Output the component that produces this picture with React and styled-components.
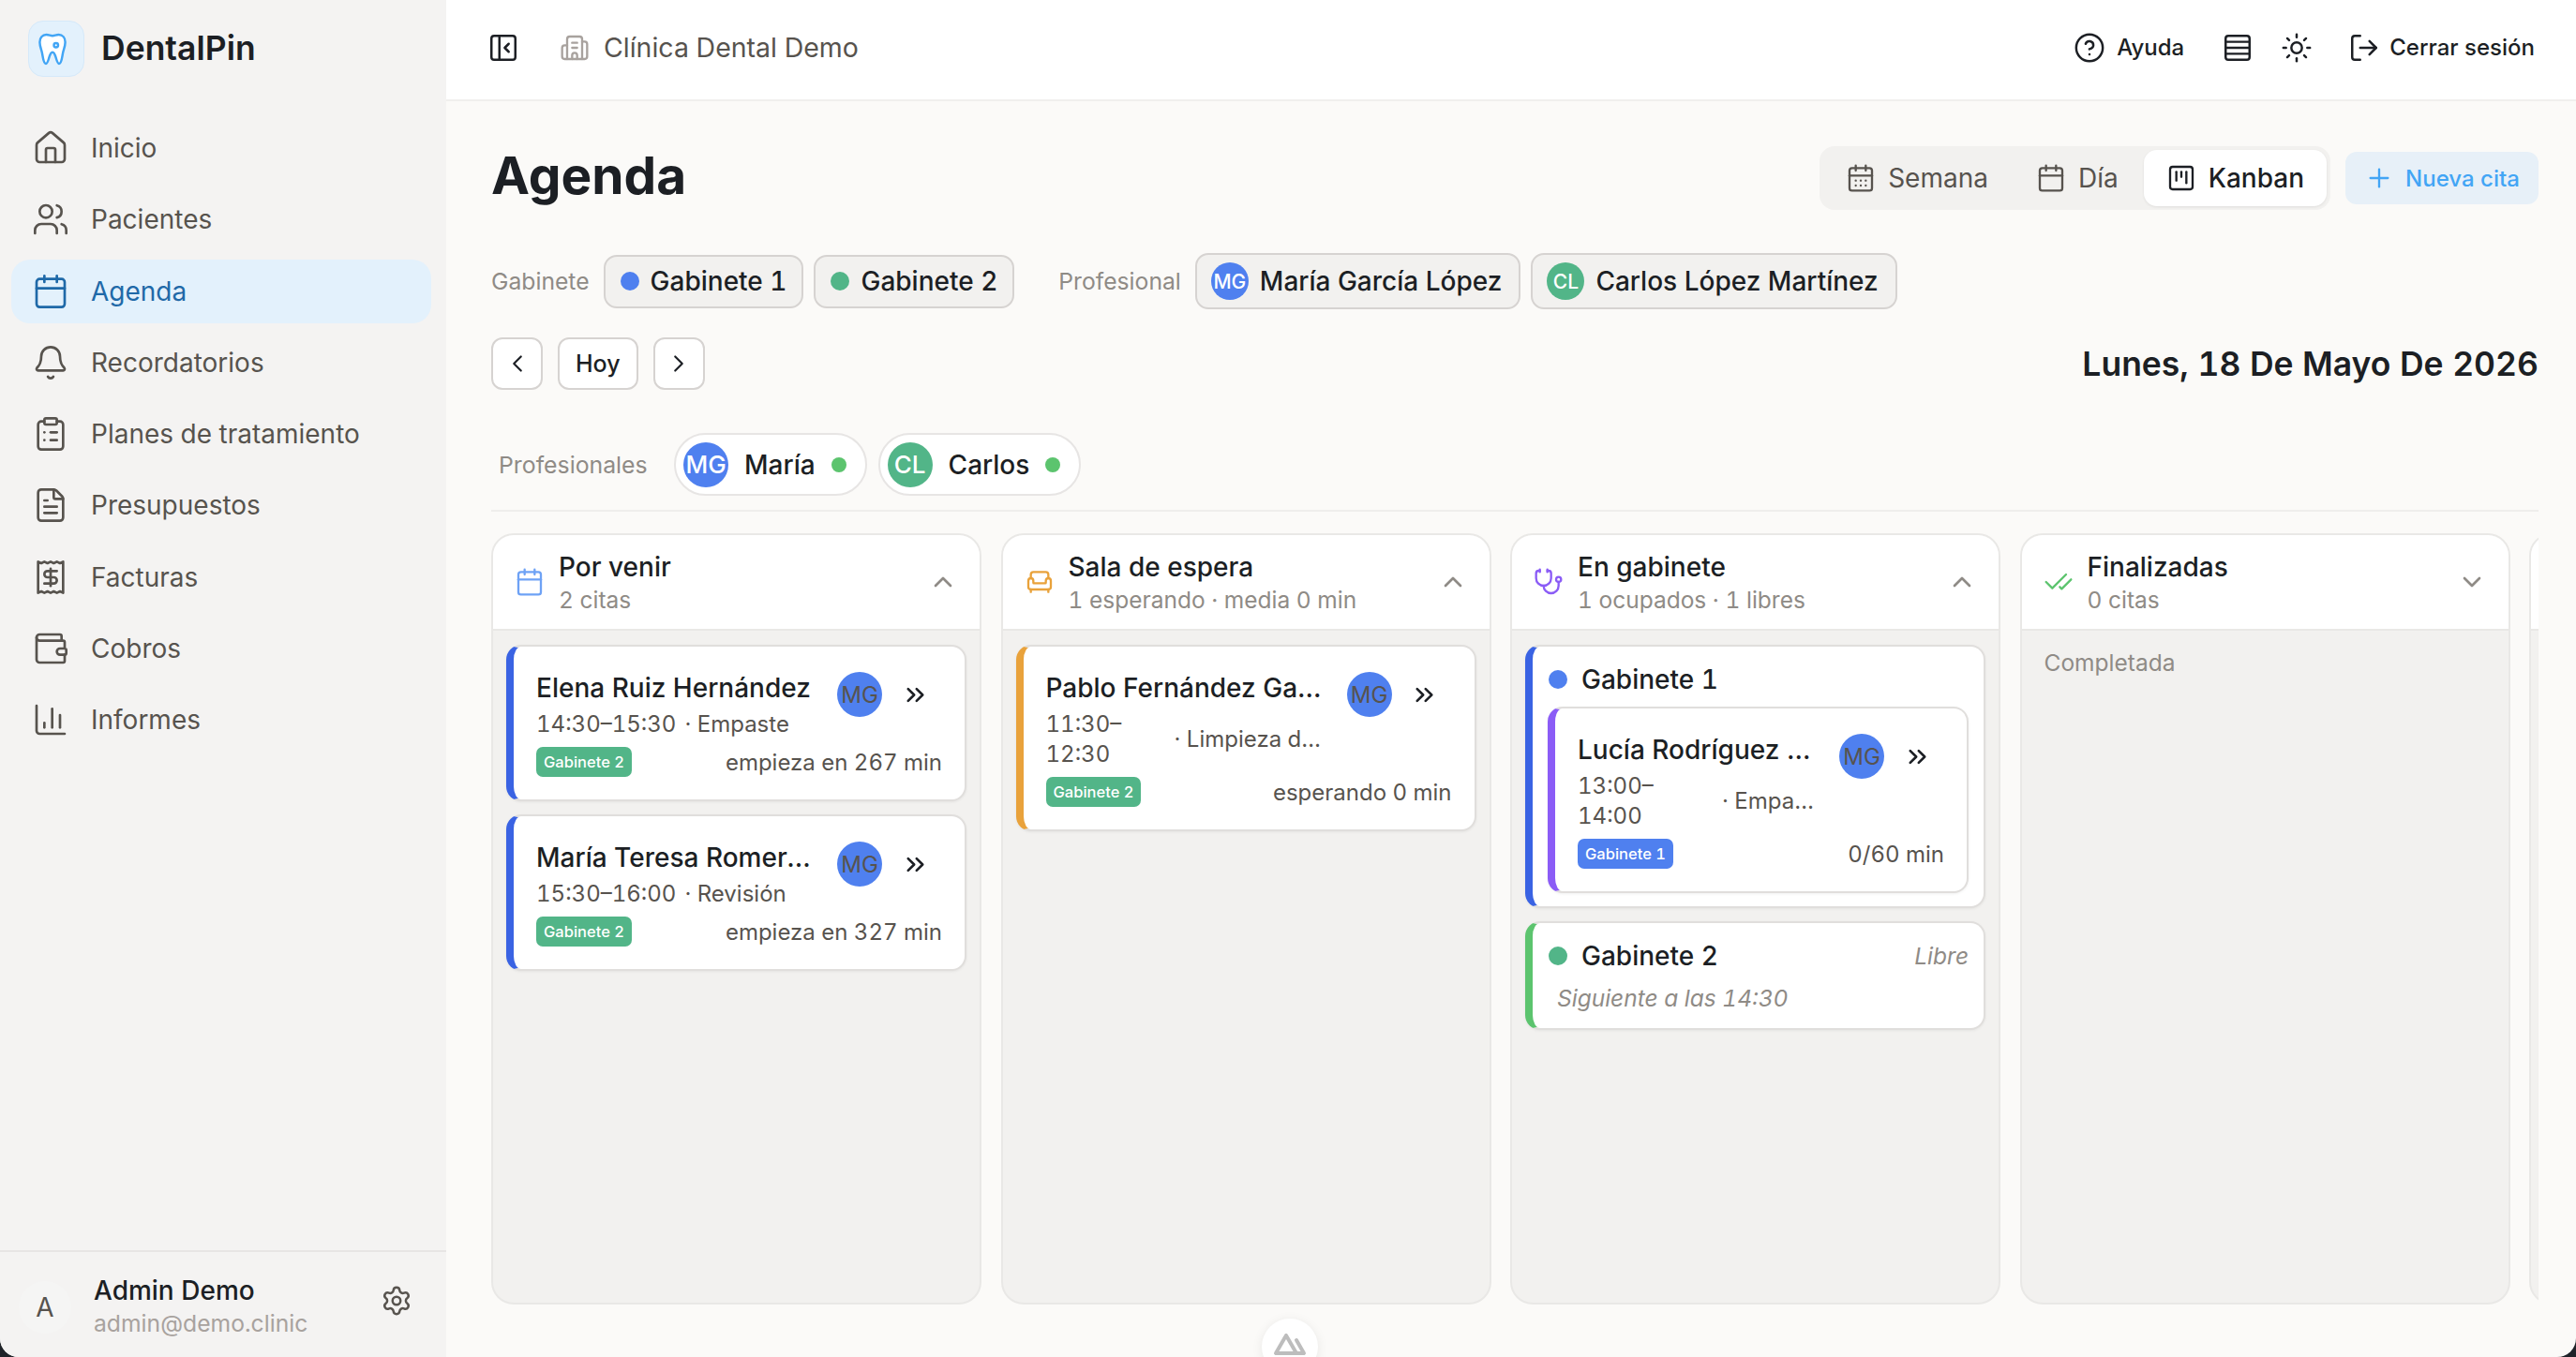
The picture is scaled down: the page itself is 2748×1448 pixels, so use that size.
import React from 'react';
import styled, { createGlobalStyle } from 'styled-components';
import {
  House, Users, Calendar, Bell, ClipboardList, FileText, Receipt, Wallet, ChartColumn,
  Settings, PanelLeftClose, Building2, CircleHelp, Rows4, Sun, LogOut, CalendarDays,
  SquareKanban, Plus, ChevronLeft, ChevronRight, ChevronUp, ChevronDown, ChevronsRight,
  Armchair, Stethoscope, CheckCheck,
} from 'lucide-react';

const GlobalStyle = createGlobalStyle`
  html, body {
    margin: 0;
    padding: 0;
    background: #1f2329;
  }
  * {
    box-sizing: border-box;
  }
`;

const Shell = styled.div`
  width: 2748px;
  height: 1448px;
  display: flex;
  overflow: hidden;
  position: relative;
  border-radius: 0 0 20px 20px;
  font-family: Inter, "Noto Sans", sans-serif;
  font-variant-numeric: tabular-nums;
  color: #1c1f24;
  background: #fbfaf8;
`;

/* sidebar */
const Sidebar = styled.aside`
  width: 476px;
  flex: none;
  display: flex;
  flex-direction: column;
  background: #f4f3f2;
`;

const Brand = styled.div`
  height: 124px;
  flex: none;
  padding: 22px 30px 0;
  display: flex;
  align-items: flex-start;
  gap: 18px;
`;

const LogoBox = styled.div`
  width: 60px;
  height: 60px;
  padding-right: 8px;
  border-radius: 16px;
  border: 1px solid #d5e9fa;
  background: #e3f1fc;
  display: flex;
  align-items: center;
  justify-content: center;
`;

const BrandName = styled.div`
  font-size: 35.5px;
  line-height: 60px;
  font-weight: 600;
`;

const Nav = styled.nav`
  flex: 1;
  display: flex;
  flex-direction: column;
  gap: 8.3px;
  padding: 0 16px 0 12px;
`;

const NavItem = styled.div`
  height: 68px;
  display: flex;
  align-items: center;
  gap: 23px;
  padding-left: 22px;
  border-radius: 20px;
  font-size: 28px;
  color: ${p => (p.$active ? '#1f69a8' : '#57534e')};
  background: ${p => (p.$active ? '#e3f1fc' : 'transparent')};
`;

const UserBar = styled.div`
  height: 114px;
  flex: none;
  border-top: 2px solid #e7e5e4;
  display: flex;
  align-items: center;
  padding: 0 36px 0 20px;
  gap: 24px;
`;

const UserAvatar = styled.div`
  width: 56px;
  height: 56px;
  margin-top: 6px;
  border-radius: 50%;
  background: #f5f5f4;
  color: #57534e;
  font-size: 28px;
  display: flex;
  align-items: center;
  justify-content: center;
`;

const UserInfo = styled.div`
  flex: 1;
  padding-top: 4px;
`;

const UserName = styled.div`
  font-size: 28px;
  line-height: 36px;
  font-weight: 500;
`;

const UserMail = styled.div`
  font-size: 24.7px;
  line-height: 34px;
  color: #a8a29e;
`;

const GearWrap = styled.span`
  display: flex;
  margin-bottom: 8px;
  color: #57534e;
`;

/* main area */
const Main = styled.main`
  flex: 1;
  min-width: 0;
  display: flex;
  flex-direction: column;
`;

const TopBar = styled.header`
  height: 108px;
  flex: none;
  background: #fff;
  border-bottom: 2px solid #f0efed;
  display: flex;
  align-items: center;
  padding: 0 44px 5px 44px;
`;

const Clinic = styled.div`
  flex: 1;
  display: flex;
  align-items: center;
  gap: 15px;
  margin-left: 43px;
  font-size: 28.5px;
  color: #57534e;
`;

const TopAction = styled.div`
  display: flex;
  align-items: center;
  gap: ${p => p.$inner || 12}px;
  margin-left: ${p => p.$gap}px;
  font-size: 24px;
  font-weight: 500;
`;

const Content = styled.div`
  flex: 1;
  min-height: 0;
  display: flex;
  flex-direction: column;
  padding: 48px 40px 0 48px;
`;

const TitleRow = styled.div`
  display: flex;
  align-items: center;
  justify-content: space-between;
`;

const Title = styled.h1`
  margin: 0 0 6px;
  font-size: 55px;
  line-height: 62px;
  font-weight: 700;
`;

const TitleActions = styled.div`
  display: flex;
  align-items: center;
  gap: 16px;
`;

const Tabs = styled.div`
  height: 68px;
  padding: 4px;
  display: flex;
  gap: 3px;
  border-radius: 16px;
  background: #f2f1ef;
`;

const Tab = styled.div`
  height: 60px;
  padding: 0 24px;
  display: flex;
  align-items: center;
  gap: 13px;
  border-radius: 14px;
  font-size: 28px;
  font-weight: ${p => (p.$active ? 500 : 400)};
  color: ${p => (p.$active ? '#1c1f24' : '#57534e')};
  background: ${p => (p.$active ? '#fff' : 'transparent')};
  box-shadow: ${p => (p.$active ? '0 1px 3px rgba(0,0,0,.08)' : 'none')};
`;

const NewButton = styled.div`
  width: 206px;
  height: 56px;
  display: flex;
  align-items: center;
  justify-content: center;
  gap: 12px;
  border-radius: 12px;
  background: #e7f0f8;
  color: #42a5f5;
  font-size: 24px;
  font-weight: 500;
`;

const FilterRow = styled.div`
  margin-top: 46px;
  height: 60px;
  display: flex;
  align-items: center;
`;

const FilterLabel = styled.span`
  font-size: 24.7px;
  color: #8f8b86;
  margin-right: 15px;
`;

const FilterChips = styled.div`
  display: flex;
  align-items: center;
  gap: 11px;
  margin-right: ${p => p.$after || 0}px;
`;

const Chip = styled.div`
  height: ${p => (p.$tall ? 60 : 57)}px;
  padding: 0 ${p => (p.$tall ? 18 : 16)}px 0 ${p => (p.$tall ? 15 : 16)}px;
  display: flex;
  align-items: center;
  gap: 12px;
  border: 2px solid #d6d3d1;
  border-radius: 14px;
  background: #f2f1ef;
  font-size: 28px;
  font-weight: 500;
`;

const Dot = styled.span`
  width: ${p => p.$size || 20}px;
  height: ${p => p.$size || 20}px;
  flex: none;
  border-radius: 50%;
  background: ${p => p.$color};
`;

const Avatar = styled.span`
  width: ${p => p.$size}px;
  height: ${p => p.$size}px;
  flex: none;
  border-radius: 50%;
  display: flex;
  align-items: center;
  justify-content: center;
  background: ${p => p.$color};
  color: ${p => p.$ink || '#fff'};
  font-size: ${p => p.$font}px;
  font-weight: ${p => p.$weight || 500};
`;

const DateRow = styled.div`
  margin-top: 30px;
  display: flex;
  align-items: center;
  justify-content: space-between;
`;

const Pager = styled.div`
  display: flex;
  gap: 16px;
`;

const PageButton = styled.div`
  height: 56px;
  min-width: 55px;
  padding: 0 ${p => (p.$text ? 17 : 0)}px;
  display: flex;
  align-items: center;
  justify-content: center;
  border: 2px solid #d6d3d1;
  border-radius: 12px;
  background: #fff;
  font-size: 25px;
  font-weight: 500;
`;

const DateTitle = styled.div`
  font-size: 35.5px;
  font-weight: 600;
`;

const ProRow = styled.div`
  margin-top: 46px;
  padding: 0 0 15px 8px;
  display: flex;
  align-items: center;
  gap: 12px;
  border-bottom: 2px solid #efeeec;
`;

const ProLabel = styled.span`
  font-size: 24.8px;
  color: #8f8b86;
  width: 159px;
  margin-right: 16px;
`;

const ProPill = styled.div`
  height: 67px;
  padding: 0 20px 0 8px;
  display: flex;
  align-items: center;
  gap: 17px;
  border: 2px solid #e7e5e4;
  border-radius: 34px;
  background: #fff;
  font-size: 28px;
  font-weight: 500;
`;

/* kanban board */
const Board = styled.div`
  margin-top: 23px;
  height: 823px;
  display: flex;
  gap: 20.5px;
  overflow: hidden;
`;

const Column = styled.section`
  width: 523px;
  flex: none;
  display: flex;
  flex-direction: column;
  border: 2px solid #e9e8e6;
  border-radius: 24px;
  background: #f2f1ef;
  overflow: hidden;
`;

const ColumnHead = styled.div`
  height: 102px;
  flex: none;
  padding: 0 23px 0 23px;
  display: flex;
  align-items: center;
  gap: 15px;
  background: #fff;
  border-bottom: 2px solid #e9e8e6;
  color: #8f8b86;
`;

const ColumnText = styled.div`
  flex: 1;
`;

const ColumnTitle = styled.div`
  font-size: 28px;
  line-height: 38px;
  font-weight: 500;
  color: #1c1f24;
`;

const ColumnSub = styled.div`
  font-size: 24.5px;
  line-height: 32px;
  color: #8f8b86;
`;

const ColumnBody = styled.div`
  flex: 1;
  padding: 15px 14px;
  display: flex;
  flex-direction: column;
  gap: 14px;
`;

const EmptyNote = styled.div`
  padding: 2px 10px 0;
  font-size: 24.5px;
  line-height: 34px;
  color: #8f8b86;
`;

const Card = styled.article`
  padding: ${p => (p.$tight ? '16px 16px 14px' : '25px 24px 24px 24px')};
  border: 2px solid #e0dedc;
  border-left: 8px solid ${p => p.$accent};
  border-radius: 16px;
  background: #fff;
  box-shadow: 0 1px 3px rgba(0, 0, 0, 0.06);
`;

const CardTop = styled.div`
  display: flex;
  align-items: flex-start;
`;

const CardMain = styled.div`
  flex: 1;
  min-width: 0;
`;

const PatientName = styled.div`
  font-size: 28px;
  line-height: 38px;
  font-weight: 500;
  white-space: nowrap;
  overflow: hidden;
  text-overflow: ellipsis;
`;

const TimeRow = styled.div`
  margin-top: 4px;
  display: flex;
  align-items: center;
  gap: 9px;
  font-size: 24px;
  line-height: 32px;
  color: #57534e;
`;

const TimeText = styled.span`
  flex: none;
  width: ${p => (p.$width ? `${p.$width}px` : 'auto')};
`;

const Treatment = styled.span`
  min-width: 0;
  white-space: nowrap;
  overflow: hidden;
  text-overflow: ellipsis;
`;

const CardSide = styled.div`
  flex: none;
  margin: 2px 7px 0 25px;
  display: flex;
  align-items: center;
  gap: 13px;
`;

const NextButton = styled.span`
  width: 44px;
  height: 44px;
  display: flex;
  align-items: center;
  justify-content: center;
  color: #1c1f24;
`;

const CardBottom = styled.div`
  margin-top: 8px;
  height: 32px;
  display: flex;
  align-items: center;
  justify-content: space-between;
  font-size: 24px;
  color: #57534e;
`;

const RoomBadge = styled.span`
  height: 32px;
  padding: 0 8px;
  display: flex;
  align-items: center;
  border-radius: 7px;
  background: ${p => p.$color};
  color: #fff;
  font-size: 16.5px;
  font-weight: 500;
`;

const RoomHead = styled.div`
  height: 38px;
  display: flex;
  align-items: center;
  gap: 15px;
  padding-left: 1px;
  font-size: 28px;
  font-weight: 500;
`;

const RoomName = styled.span`
  flex: 1;
`;

const FreeTag = styled.span`
  font-size: 24.5px;
  font-style: italic;
  font-weight: 400;
  color: #8f8b86;
`;

const NextNote = styled.div`
  margin: 10px 0 2px;
  padding-left: 10px;
  font-size: 24.5px;
  line-height: 32px;
  font-style: italic;
  color: #8f8b86;
`;

const NestedCard = styled(Card)`
  margin-top: 10px;
`;

const DevButton = styled.div`
  position: absolute;
  left: 1346px;
  top: 1407px;
  width: 60px;
  height: 60px;
  border-radius: 50%;
  background: #fff;
  box-shadow: 0 2px 12px rgba(0, 0, 0, 0.08);
  display: flex;
  justify-content: center;
  padding-top: 14px;
`;

const ToothIcon = () => (
  <svg width="30" height="37" viewBox="0 0 32 38" fill="#fff" stroke="#42a5f5" strokeWidth="2.6" strokeLinejoin="round">
    <path d="M9 2.500c3 0 4.500 1.200 7 1.200s4-1.200 7-1.200c4.500 0 7.500 3.500 7.500 8.500 0 4.500-1.700 8-2.600 12-1 4.500-1.400 12.500-4.400 12.500-3.500 0-3.300-13-7.500-13s-4 13-7.500 13c-3 0-3.400-8-4.400-12.500C3.200 19 1.500 15.500 1.500 11c0-5 3-8.500 7.500-8.500z" />
    <circle cx="20" cy="14.500" r="2.400" />
  </svg>
);

const NuxtMark = () => (
  <svg width="36" height="26" viewBox="0 0 36 26" fill="none" stroke="#bdbdbd" strokeWidth="4" strokeLinejoin="round" strokeLinecap="round">
    <path d="M14 4 3 23h13M14 4l11 19h-9M14 4M25 9l8 14h-8" />
  </svg>
);

const navItems = [
  [House, 'Inicio'],
  [Users, 'Pacientes'],
  [Calendar, 'Agenda', true],
  [Bell, 'Recordatorios'],
  [ClipboardList, 'Planes de tratamiento'],
  [FileText, 'Presupuestos'],
  [Receipt, 'Facturas'],
  [Wallet, 'Cobros'],
  [ChartColumn, 'Informes'],
];

const BLUE = '#4f80ef';
const GREEN = '#52b588';

const Appointment = ({ accent, name, time, timeWidth, treatment, room, roomColor, note, Wrap = Card }) => (
  <Wrap $accent={accent}>
    <CardTop>
      <CardMain>
        <PatientName>{name}</PatientName>
        <TimeRow>
          <TimeText $width={timeWidth}>{time}</TimeText>
          <Treatment>· {treatment}</Treatment>
        </TimeRow>
      </CardMain>
      <CardSide>
        <Avatar $size={48} $font={24} $weight={400} $color={BLUE} $ink="#57534e">MG</Avatar>
        <NextButton><ChevronsRight size={31} strokeWidth={2} /></NextButton>
      </CardSide>
    </CardTop>
    <CardBottom>
      <RoomBadge $color={roomColor}>{room}</RoomBadge>
      <span>{note}</span>
    </CardBottom>
  </Wrap>
);

const BoardColumn = ({ icon: Icon, color, title, sub, open = true, children }) => (
  <Column>
    <ColumnHead>
      <Icon size={32} color={color} strokeWidth={1.75} />
      <ColumnText>
        <ColumnTitle>{title}</ColumnTitle>
        <ColumnSub>{sub}</ColumnSub>
      </ColumnText>
      {open ? <ChevronUp size={32} strokeWidth={2} /> : <ChevronDown size={32} strokeWidth={2} />}
    </ColumnHead>
    <ColumnBody>{children}</ColumnBody>
  </Column>
);

const App = () => (
  <>
    <GlobalStyle />
    <Shell>
      <Sidebar>
        <Brand>
          <LogoBox><ToothIcon /></LogoBox>
          <BrandName>DentalPin</BrandName>
        </Brand>
        <Nav>
          {navItems.map(([Icon, label, active]) => (
            <NavItem key={label} $active={active}>
              <Icon size={40} strokeWidth={1.6} />
              {label}
            </NavItem>
          ))}
        </Nav>
        <UserBar>
          <UserAvatar>A</UserAvatar>
          <UserInfo>
            <UserName>Admin Demo</UserName>
            <UserMail>admin@demo.clinic</UserMail>
          </UserInfo>
          <GearWrap><Settings size={34} strokeWidth={1.75} /></GearWrap>
        </UserBar>
      </Sidebar>
      <Main>
        <TopBar>
          <PanelLeftClose size={34} strokeWidth={1.75} />
          <Clinic>
            <Building2 size={32} color="#a8a29e" strokeWidth={1.75} />
            Clínica Dental Demo
          </Clinic>
          <TopAction><CircleHelp size={34} strokeWidth={1.75} />Ayuda</TopAction>
          <TopAction $gap={40}><Rows4 size={34} strokeWidth={1.75} /></TopAction>
          <TopAction $gap={29}><Sun size={34} strokeWidth={1.75} /></TopAction>
          <TopAction $gap={38} $inner={10}><LogOut size={34} strokeWidth={1.75} />Cerrar sesión</TopAction>
        </TopBar>
        <Content>
          <TitleRow>
            <Title>Agenda</Title>
            <TitleActions>
              <Tabs>
                <Tab><CalendarDays size={32} color="#57534e" strokeWidth={1.75} />Semana</Tab>
                <Tab><Calendar size={32} color="#57534e" strokeWidth={1.75} />Día</Tab>
                <Tab $active><SquareKanban size={32} strokeWidth={1.75} />Kanban</Tab>
              </Tabs>
              <NewButton><Plus size={32} strokeWidth={1.75} />Nueva cita</NewButton>
            </TitleActions>
          </TitleRow>
          <FilterRow>
            <FilterLabel>Gabinete</FilterLabel>
            <FilterChips $after={47}>
              <Chip><Dot $color={BLUE} />Gabinete 1</Chip>
              <Chip><Dot $color={GREEN} />Gabinete 2</Chip>
            </FilterChips>
            <FilterLabel>Profesional</FilterLabel>
            <FilterChips>
              <Chip $tall><Avatar $size={40} $font={21} $color={BLUE}>MG</Avatar>María García López</Chip>
              <Chip $tall><Avatar $size={40} $font={21} $color={GREEN}>CL</Avatar>Carlos López Martínez</Chip>
            </FilterChips>
          </FilterRow>
          <DateRow>
            <Pager>
              <PageButton><ChevronLeft size={30} strokeWidth={1.75} /></PageButton>
              <PageButton $text>Hoy</PageButton>
              <PageButton><ChevronRight size={30} strokeWidth={1.75} /></PageButton>
            </Pager>
            <DateTitle>Lunes, 18 De Mayo De 2026</DateTitle>
          </DateRow>
          <ProRow>
            <ProLabel>Profesionales</ProLabel>
            <ProPill><Avatar $size={48} $font={26} $color={BLUE}>MG</Avatar>María<Dot $size={16} $color="#5cc46e" /></ProPill>
            <ProPill><Avatar $size={48} $font={26} $color={GREEN}>CL</Avatar>Carlos<Dot $size={16} $color="#5cc46e" /></ProPill>
          </ProRow>
          <Board>
            <BoardColumn icon={Calendar} color="#6ea2f5" title="Por venir" sub="2 citas">
              <Appointment accent="#3a63e3" name="Elena Ruiz Hernández" time="14:30–15:30" treatment="Empaste" room="Gabinete 2" roomColor={GREEN} note="empieza en 267 min" />
              <Appointment accent="#3a63e3" name="María Teresa Romero Díaz" time="15:30–16:00" treatment="Revisión" room="Gabinete 2" roomColor={GREEN} note="empieza en 327 min" />
            </BoardColumn>
            <BoardColumn icon={Armchair} color="#e9a23b" title="Sala de espera" sub="1 esperando · media 0 min">
              <Appointment accent="#e9a23b" name="Pablo Fernández García" time="11:30–12:30" timeWidth={128} treatment="Limpieza dental" room="Gabinete 2" roomColor={GREEN} note="esperando 0 min" />
            </BoardColumn>
            <BoardColumn icon={Stethoscope} color="#8b5cf6" title="En gabinete" sub="1 ocupados · 1 libres">
              <Card $accent="#3a63e3" $tight>
                <RoomHead><Dot $color={BLUE} /><RoomName>Gabinete 1</RoomName></RoomHead>
                <Appointment Wrap={NestedCard} accent="#8b5cf6" name="Lucía Rodríguez Sánchez" time="13:00–14:00" timeWidth={145} treatment="Empaste dental" room="Gabinete 1" roomColor={BLUE} note="0/60 min" />
              </Card>
              <Card $accent="#5cc46e" $tight>
                <RoomHead><Dot $color={GREEN} /><RoomName>Gabinete 2</RoomName><FreeTag>Libre</FreeTag></RoomHead>
                <NextNote>Siguiente a las 14:30</NextNote>
              </Card>
            </BoardColumn>
            <BoardColumn icon={CheckCheck} color="#5cc46e" title="Finalizadas" sub="0 citas" open={false}>
              <EmptyNote>Completada</EmptyNote>
            </BoardColumn>
            <Column><ColumnHead /><ColumnBody /></Column>
          </Board>
        </Content>
      </Main>
      <DevButton><NuxtMark /></DevButton>
    </Shell>
  </>
);

export default App;
